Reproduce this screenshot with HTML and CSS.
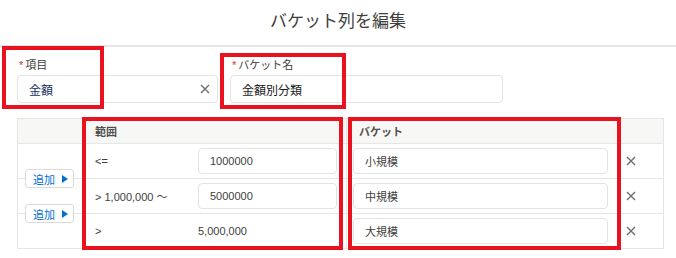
FILE: index.html
```html
<!DOCTYPE html>
<html lang="ja">
<head>
    <meta charset="UTF-8">
    <meta name="viewport" content="width=device-width, initial-scale=1.0">
    <title>バケット列を編集</title>
    <link rel="stylesheet" href="styles.css">
</head>
<body>
    <div class="page">
        <div class="modal-header">
            <h2>バケット列を編集</h2>
        </div>

        <div class="fields">
            <div class="field field-source">
                <label><span class="req">*</span>項目</label>
                <div class="input lookup">
                    <span class="value">金額</span>
                    <svg class="clear-icon" viewBox="0 0 10 10" width="10" height="10">
                        <path d="M1 1 L9 9 M9 1 L1 9" />
                    </svg>
                </div>
            </div>
            <div class="field field-name">
                <label><span class="req">*</span>バケット名</label>
                <div class="input">
                    <span>金額別分類</span>
                </div>
            </div>
        </div>

        <table class="bucket-table">
            <colgroup>
                <col class="col-add">
                <col class="col-range">
                <col class="col-bucket">
                <col class="col-del">
            </colgroup>
            <thead>
                <tr>
                    <th></th>
                    <th>範囲</th>
                    <th>バケット</th>
                    <th></th>
                </tr>
            </thead>
            <tbody>
                <tr>
                    <td class="add-cell">
                        <button class="add-btn">追加
                            <svg viewBox="0 0 6 8" width="6" height="8"><path d="M0 0 L6 4 L0 8 Z" /></svg>
                        </button>
                    </td>
                    <td>
                        <div class="range">
                            <span class="op">&lt;=</span>
                            <div class="input small">1000000</div>
                        </div>
                    </td>
                    <td class="bucket-cell"><div class="input small">小規模</div></td>
                    <td class="del-cell">
                        <svg class="del-icon" viewBox="0 0 10 10" width="10" height="10"><path d="M1 1 L9 9 M9 1 L1 9" /></svg>
                    </td>
                </tr>
                <tr>
                    <td class="add-cell">
                        <button class="add-btn">追加
                            <svg viewBox="0 0 6 8" width="6" height="8"><path d="M0 0 L6 4 L0 8 Z" /></svg>
                        </button>
                    </td>
                    <td>
                        <div class="range">
                            <span class="op">&gt; 1,000,000 ～</span>
                            <div class="input small">5000000</div>
                        </div>
                    </td>
                    <td class="bucket-cell"><div class="input small">中規模</div></td>
                    <td class="del-cell">
                        <svg class="del-icon" viewBox="0 0 10 10" width="10" height="10"><path d="M1 1 L9 9 M9 1 L1 9" /></svg>
                    </td>
                </tr>
                <tr>
                    <td class="add-cell"></td>
                    <td>
                        <div class="range">
                            <span class="op">&gt;</span>
                            <span class="plain">5,000,000</span>
                        </div>
                    </td>
                    <td class="bucket-cell"><div class="input small">大規模</div></td>
                    <td class="del-cell">
                        <svg class="del-icon" viewBox="0 0 10 10" width="10" height="10"><path d="M1 1 L9 9 M9 1 L1 9" /></svg>
                    </td>
                </tr>
            </tbody>
        </table>

        <!-- red annotation boxes -->
        <div class="mark mark-source"></div>
        <div class="mark mark-name"></div>
        <div class="mark mark-range"></div>
        <div class="mark mark-bucket"></div>
    </div>
</body>
</html>
```

FILE: styles.css
```css
body {
    margin: 0;
    background: #fff;
    font-family: 'Liberation Sans', 'Noto Sans CJK JP', sans-serif;
    color: #3e3e3c;
}

.page {
    position: relative;
    width: 676px;
    height: 258px;
    overflow: hidden;
}

.modal-header {
    height: 45px;
    border-bottom: 2px solid #e5e5e5;
}

.modal-header h2 {
    margin: 0;
    font-size: 17px;
    font-weight: 400;
    line-height: 44px;
    text-align: center;
    color: #3e3e3c;
}

.fields {
    display: flex;
    gap: 12px;
    padding: 11px 0 0 17px;
}

.field label {
    display: block;
    height: 14px;
    line-height: 14px;
    font-size: 11px;
    padding-left: 2px;
    margin-bottom: 3px;
    color: #3e3e3c;
}

.req {
    color: #c23934;
    margin-right: 2px;
}

.field-source {
    width: 201px;
}

.field-name {
    width: 273px;
}

.input {
    box-sizing: border-box;
    height: 28px;
    border: 1px solid #e3e3e3;
    border-radius: 4px;
    padding: 0 11px;
    display: flex;
    align-items: center;
    font-size: 12px;
    color: #181818;
    background: #fff;
}

.lookup {
    justify-content: space-between;
    padding-right: 7px;
}

.lookup .value {
    color: #16325c;
}

.clear-icon path,
.del-icon path {
    stroke: #706e6b;
    stroke-width: 1.4;
    fill: none;
}

.bucket-table {
    margin: 15px 0 0 17px;
    width: 646px;
    table-layout: fixed;
    border-collapse: collapse;
    font-size: 11px;
}

.col-add { width: 65px; }
.col-range { width: 264px; }
.col-bucket { width: 271px; }
.col-del { width: 46px; }

.bucket-table th,
.bucket-table td {
    border: 1px solid #e6e6e6;
    padding: 0;
}

.bucket-table th {
    height: 24px;
    background: #f7f7f5;
    text-align: left;
    padding-left: 12px;
    font-weight: 700;
    color: #514f4d;
}

.bucket-table td {
    height: 34px;
    vertical-align: middle;
}

.range {
    display: flex;
    align-items: center;
    padding: 0 9px 0 12px;
}

.range .op {
    flex: 0 0 103px;
    color: #3e3e3c;
}

.range .input {
    flex: 1;
}

.input.small {
    height: 26px;
    font-size: 11px;
    color: #3e3e3c;
}

.plain {
    color: #3e3e3c;
}

.bucket-cell {
    padding: 0 9px 0 6px !important;
}

.del-cell {
    padding-left: 8px !important;
}

.del-icon {
    display: block;
}

.add-cell {
    position: relative;
}

.add-btn {
    position: absolute;
    left: 7px;
    bottom: -10px;
    z-index: 1;
    width: 49px;
    height: 19px;
    padding: 0 0 0 7px;
    border: 1px solid #dddbda;
    border-radius: 3px;
    background: #fff;
    color: #0070d2;
    font-family: inherit;
    font-size: 11px;
    display: flex;
    align-items: center;
    gap: 7px;
}

.add-btn svg path {
    fill: #0070d2;
}

/* annotation boxes drawn over the screen */
.mark {
    position: absolute;
    box-sizing: border-box;
    border: 4px solid #e8131f;
    z-index: 5;
}

.mark-source { left: 2px; top: 46px; width: 102px; height: 63px; }
.mark-name { left: 220px; top: 53px; width: 126px; height: 56px; }
.mark-range { left: 82px; top: 117px; width: 261px; height: 133px; }
.mark-bucket { left: 348px; top: 117px; width: 273px; height: 133px; }
```
